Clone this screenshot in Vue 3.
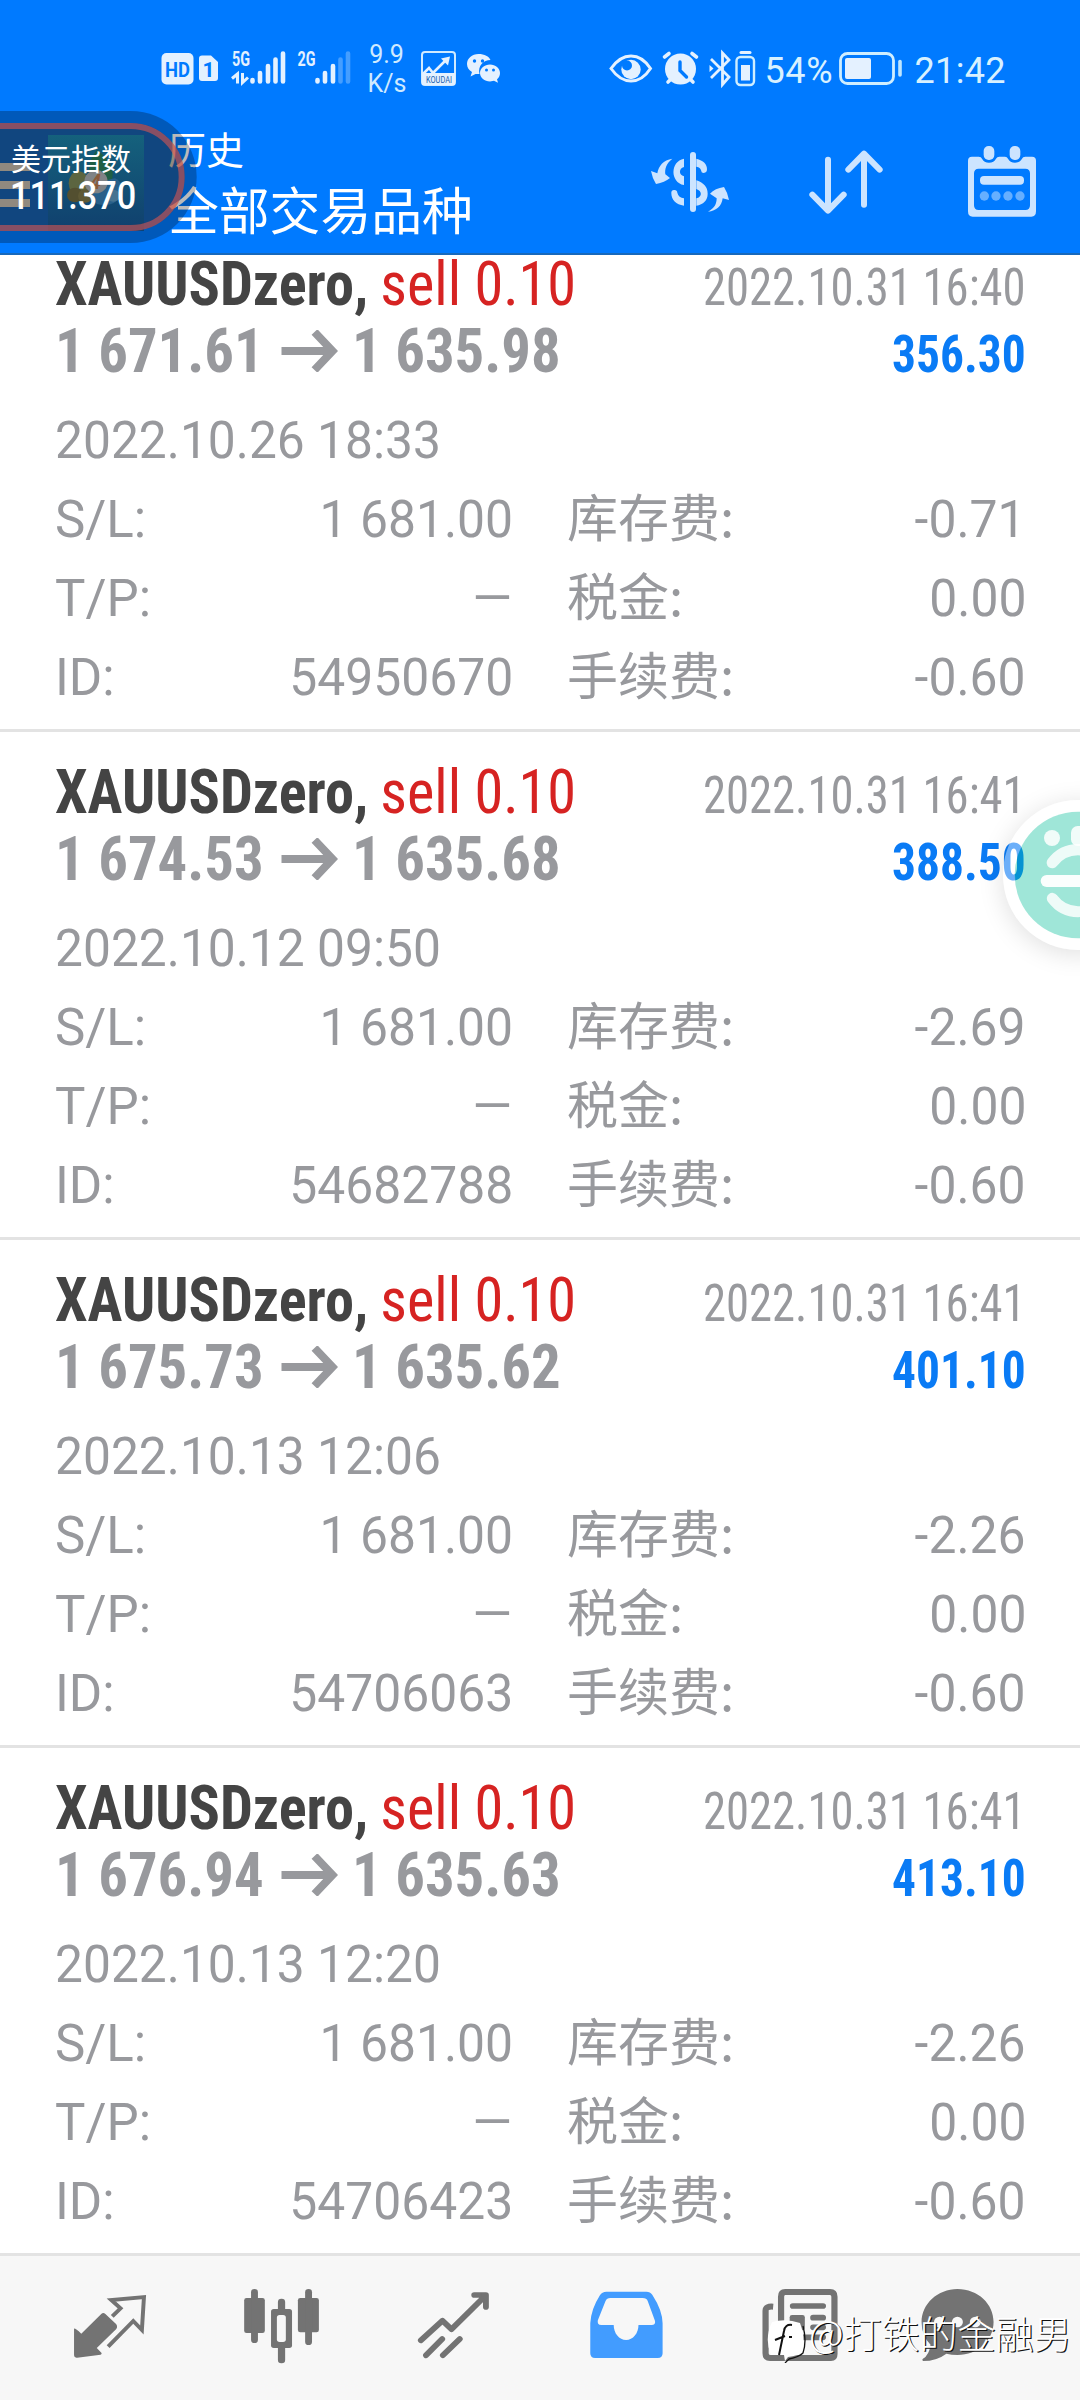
<script setup>
const deals = [
  { open: '1 671.61', close: '1 635.98', closed: '2022.10.31 16:40', profit: '356.30', opened: '2022.10.26 18:33', id: '54950670', swap: '-0.71' },
  { open: '1 674.53', close: '1 635.68', closed: '2022.10.31 16:41', profit: '388.50', opened: '2022.10.12 09:50', id: '54682788', swap: '-2.69' },
  { open: '1 675.73', close: '1 635.62', closed: '2022.10.31 16:41', profit: '401.10', opened: '2022.10.13 12:06', id: '54706063', swap: '-2.26' },
  { open: '1 676.94', close: '1 635.63', closed: '2022.10.31 16:41', profit: '413.10', opened: '2022.10.13 12:20', id: '54706423', swap: '-2.26' },
]
const rowsOf = (d) => [
  { a: 'S/L:', av: '1 681.00', b: '库存费:', bv: d.swap },
  { a: 'T/P:', av: '—', b: '税金:', bv: '0.00' },
  { a: 'ID:', av: d.id, b: '手续费:', bv: '-0.60' },
]
</script>

<template>
  <div class="screen">
    <header class="header">
      <div class="status">
        <svg class="st-left" width="350" height="60" viewBox="160 40 350 60">
          <rect x="161.5" y="53" width="32" height="31.500" rx="5" fill="#e4f1ff" />
          <text x="165" y="76.500" class="hd" textLength="25" lengthAdjust="spacingAndGlyphs">HD</text>
          <path d="M202 55.500h9l7 6.500v16a3 3 0 0 1-3 3h-13a3 3 0 0 1-3-3v-19.500a3 3 0 0 1 3-3z" fill="#e4f1ff" />
          <text x="202.500" y="76.500" class="hd">1</text>
          <text x="232" y="66" class="net" textLength="18" lengthAdjust="spacingAndGlyphs">5G</text>
          <path d="M232 78.500l5.500-4.500v9.500M242.500 73v9.500l5.500-5" fill="none" stroke="#e4f1ff" stroke-width="3" />
          <g stroke="#e4f1ff" stroke-width="4.600" stroke-linecap="round">
            <path d="M252.500 80v1.500M260 73v8.500M268 66v15.500M275.500 59.500v22M283 53.500v28" />
            <path d="M317.500 80v1.500M325 73v8.500M333 66v15.500" />
            <path d="M340.500 59.500v22M348 53.500v28" opacity=".3" />
          </g>
          <text x="297.500" y="66" class="net" textLength="18" lengthAdjust="spacingAndGlyphs">2G</text>
          <text x="386.500" y="63" class="speed" text-anchor="middle">9.9</text>
          <text x="387" y="92" class="speed" text-anchor="middle">K/s</text>
          <rect x="422" y="52" width="33" height="33" rx="3" fill="none" stroke="#cfeaff" stroke-width="2" />
          <path d="M422 73h33v12h-33z" fill="#e4f1ff" />
          <path d="M423 74l6-6 4 5 14-14" fill="none" stroke="#e4f1ff" stroke-width="2.600" />
          <path d="M441 58.500l9-2-2 9z" fill="#e4f1ff" />
          <text x="426" y="82.500" class="koudai" textLength="26" lengthAdjust="spacingAndGlyphs">KOUDAI</text>
          <path d="M478.500 54c-6.500 0-11.500 4.500-11.500 10 0 3.500 2 6.500 5 8l-1.500 4.500 5-2.500h4c-2-8 4-14 11-14-1.500-3.500-6-6-12-6z" fill="#e4f1ff" />
          <path d="M490 64.500c-5.500 0-10 3.800-10 8.500s4.500 8.500 10 8.500l4-.7 4 2-1-3.500c2-1.500 3-3.800 3-6.300 0-4.700-4.500-8.500-10-8.500z" fill="#e4f1ff" />
          <g fill="#007aff"><circle cx="474.500" cy="61" r="1.700" /><circle cx="482.500" cy="61" r="1.700" /><circle cx="486.500" cy="70" r="1.500" /><circle cx="493.500" cy="70" r="1.500" /></g>
        </svg>
        <svg class="st-right" width="420" height="60" viewBox="600 40 420 60">
          <path d="M611 68.500C617 60 623 56 631 56s14 4 19.500 12.500C645 77 639 81 631 81s-14-4-20-12.500z" fill="none" stroke="#e4f1ff" stroke-width="3" />
          <circle cx="631" cy="69.500" r="9.700" fill="#e4f1ff" /><circle cx="627" cy="65.500" r="5" fill="#007aff" />
          <circle cx="680.500" cy="69" r="15.500" fill="#e4f1ff" />
          <path d="M664.500 57l4.500-3.500M696.500 57l-4.500-3.500M668 82l4-4M693 82l-4-4" stroke="#e4f1ff" stroke-width="3.600" stroke-linecap="round" />
          <path d="M680 62v8.500l6.500 6.500" fill="none" stroke="#007aff" stroke-width="3.400" stroke-linecap="round" />
          <path d="M711 59l18 18-6.500 7.500V53l6.500 7L711 78" fill="none" stroke="#e4f1ff" stroke-width="2.800" />
          <path d="M709.500 65l4 3.500-4 3.500z" fill="#e4f1ff" />
          <path d="M741 52.500h9" stroke="#e4f1ff" stroke-width="3" stroke-linecap="round" />
          <rect x="736.500" y="57" width="17.500" height="28" rx="4" fill="none" stroke="#cfeeff" stroke-width="2.400" />
          <path d="M741 65h9v15.500h-9z" fill="#e4f1ff" />
          <text x="764.500" y="83" class="clock" textLength="68">54%</text>
          <rect x="840.500" y="53.500" width="53" height="30" rx="7" fill="none" stroke="#cfeeff" stroke-width="2.800" />
          <rect x="845" y="58" width="26" height="21" rx="2" fill="#e4f1ff" />
          <path d="M900 61.500v13.500" stroke="#bfe6ff" stroke-width="3.600" stroke-linecap="round" />
          <text x="914.500" y="83" class="clock" textLength="91">21:42</text>
        </svg>
      </div>
      <div class="toolbar">
        <svg class="menu" width="30" height="44" viewBox="0 0 30 44"><path d="M0 4h30M0 22h30M0 40h30" stroke="#fff" stroke-width="8" /></svg>
        <div class="titles">
          <div class="t1">历史</div>
          <div class="t2">全部交易品种</div>
        </div>
        <div class="actions">
          <svg width="80" height="62" viewBox="90 90 240 186" fill="#cce4ff">
            <path d="M192 113V138C176 142 176 162 192 166V192C150 184 150 121 192 113Z" />
            <rect x="210" y="93" width="18" height="180" rx="9" />
            <path d="M229 113C250 118 262 130 261 145A10 10 0 0 1 245 154C243 142 238 138 229 137Z" />
            <path d="M229 178C252 186 263 198 263 218C263 238 250 250 229 254V232C247 228 247 210 229 204Z" />
            <path d="M154 217A9 9 0 0 1 172 215C174 225 182 231 192 232V254C168 252 154 236 154 217Z" />
            <path d="M157 113C138 128 134 145 136 160L150 171Q134 184 108 189Q97 172 93 150L112 157C115 135 130 117 157 113Z" />
            <path d="M264 272C284 262 290 248 290 232L270 218Q285 202 312 198Q323 215 327 237L308 232C305 255 290 270 264 272Z" />
          </svg>
          <svg class="sort" width="74" height="64" viewBox="567 91 222 192" fill="none" stroke="#cce4ff" stroke-width="18" stroke-linecap="round" stroke-linejoin="round">
            <path d="M624 120V272M577 225L624 273L671 225M732 255V102M685 150L732 102L779 150" />
          </svg>
          <svg width="68" height="71" viewBox="1044 80 204 213" fill="#cce4ff">
            <path fill-rule="evenodd" d="M1056 112H1076Q1084 112 1086 118Q1092 130 1107 130T1128 118Q1131 112 1138 112H1155Q1161 112 1164 118Q1170 130 1185 130T1206 118Q1208 112 1216 112H1236Q1248 112 1248 124V276Q1248 292 1234 292H1058Q1044 292 1044 276V124Q1044 112 1056 112ZM1076 148Q1062 148 1062 162V258Q1062 272 1076 272H1216Q1230 272 1230 258V162Q1230 148 1216 148Z" />
            <rect x="1088" y="90" width="38" height="36" rx="17" fill="#007aff" /><rect x="1166" y="90" width="38" height="36" rx="17" fill="#007aff" />
            <rect x="1091" y="80" width="32" height="42" rx="15" /><rect x="1169" y="80" width="32" height="42" rx="15" />
            <rect x="1080" y="170" width="132" height="26" rx="12" />
            <g opacity=".5"><circle cx="1093" cy="230" r="14" /><circle cx="1128" cy="230" r="14" /><circle cx="1164" cy="230" r="14" /><circle cx="1200" cy="230" r="14" /></g>
          </svg>
        </div>
      </div>
    </header>

    <main class="list">
      <article v-for="d in deals" :key="d.id" class="deal">
        <div class="line">
          <div class="head"><b class="symbol">XAUUSDzero,</b><span class="side">sell 0.10</span></div>
          <span class="closed">{{ d.closed }}</span>
        </div>
        <div class="line">
          <div class="prices">
            <span>{{ d.open }}</span>
            <svg width="57" height="42" viewBox="0 0 56 42" fill="none" stroke="#98999d" stroke-width="8"><path d="M0 21H51M33 2L51 21L33 40" /></svg>
            <span>{{ d.close }}</span>
          </div>
          <span class="profit">{{ d.profit }}</span>
        </div>
        <div class="opened"><span>{{ d.opened }}</span></div>
        <div v-for="r in rowsOf(d)" :key="r.a" class="row">
          <div class="cell"><span>{{ r.a }}</span><span class="r" :class="{ none: r.av === '—' }">{{ r.av }}</span></div>
          <div class="cell"><span class="cn">{{ r.b }}</span><span class="r">{{ r.bv }}</span></div>
        </div>
      </article>
    </main>

    <nav class="nav">
      <svg viewBox="0 48 522.670 432" preserveAspectRatio="none">
        <path d="M215 266Q218 264 236 281L294 222Q300 216 306 222L337 252Q343 260 337 268L281 324L295 339Q296 343 292 344L224 353Q215 354 215 346Z" fill="#737373" />
        <path d="M326 229L350 205L323 180L418 171L412 270L387 243L314 320" fill="none" stroke="#737373" stroke-width="11.500" />
      </svg>
      <svg viewBox="522.670 48 522.670 432" preserveAspectRatio="none">
        <g fill="#737373"><rect x="709" y="174" width="60" height="105" rx="7" /><rect x="865" y="174" width="61" height="103" rx="7" /><rect x="729" y="147" width="20" height="162" rx="10" /><rect x="886" y="147" width="20" height="168" rx="10" /><rect x="807" y="176" width="21" height="50" rx="10" /><rect x="807" y="305" width="21" height="65" rx="10" />
          <rect x="787" y="207" width="61" height="117" rx="8" /></g>
        <rect x="804" y="225" width="26" height="81" rx="8" fill="#f7f7f7" />
      </svg>
      <svg viewBox="1045.330 48 522.670 432" preserveAspectRatio="none" fill="none" stroke="#737373" stroke-width="17" stroke-linecap="round" stroke-linejoin="round">
        <path d="M1222 301L1285 242L1311 268L1405 172M1377 165H1411V201" />
        <path d="M1237 346L1284 297M1286 346L1335 297" />
        <path d="M1402 164H1412V178Z" stroke-width="10" fill="#737373" />
      </svg>
      <svg viewBox="0 48 522.670 432" preserveAspectRatio="none">
        <path fill="#429cff" fill-rule="evenodd" d="M193 155H309Q320 155 326 164Q356 212 356 250V340Q356 354 342 354H160Q146 354 146 340V250Q148 208 174 166Q180 155 193 155ZM204 174Q194 174 190 184L168 241Q165 255 178 255H214C214 280 230 300 250 300S286 280 286 255H324Q336 255 334 243L313 184Q310 174 298 174Z" />
      </svg>
      <svg viewBox="522.670 48 522.670 432" preserveAspectRatio="none">
        <path d="M677 200Q655 198 655 212V340Q655 354 668 354H845Q855 354 855 342V170Q855 156 842 156H712Q700 156 700 170V300" fill="none" stroke="#737373" stroke-width="18" />
        <path d="M734 198H822M793 233H822M793 262H822M734 292H822" stroke="#737373" stroke-width="17" stroke-linecap="round" />
        <rect x="725" y="225" width="44" height="46" rx="7" fill="#737373" />
      </svg>
      <svg viewBox="1045.330 48 522.670 432" preserveAspectRatio="none">
        <path d="M1212 147C1272 147 1317 192 1317 246S1272 345 1212 345Q1195 345 1180 341Q1152 363 1112 363Q1108 359 1112 356Q1130 345 1134 314Q1108 288 1108 246C1108 192 1155 147 1212 147Z" fill="#737373" />
        <g fill="#f7f7f7"><circle cx="1160" cy="246" r="16" /><circle cx="1212" cy="246" r="16" /><circle cx="1264" cy="246" r="16" /></g>
      </svg>
    </nav>

    <div class="index-pill">
      <svg width="200" height="140" viewBox="0 21 600 420">
        <defs>
          <linearGradient id="teal" x1="0" y1="0" x2="0" y2="1"><stop offset="0" stop-color="#15647c" /><stop offset="1" stop-color="#103f6c" /></linearGradient>
        </defs>
        <path d="M0 33H392A198 198 0 0 1 392 429H0Z" fill="#000" fill-opacity=".27" />
        <path d="M0 69H392A162 162 0 0 1 392 393H0Z" fill="#362000" fill-opacity=".317" />
        <g>
          <rect x="144" y="105" width="288" height="288" fill="url(#teal)" fill-opacity=".9" />
          <path d="M290 150Q350 190 335 245L270 235Q258 190 290 150Z" fill="#1f5f44" />
          <ellipse cx="236" cy="250" rx="30" ry="36" fill="#5c6540" />
          <ellipse cx="225" cy="285" rx="24" ry="22" fill="#534f30" /><ellipse cx="256" cy="288" rx="22" ry="20" fill="#5f5935" />
          <path d="M275 285Q300 240 345 235Q375 250 366 285Q340 325 290 312Z" fill="#28608a" />
          <ellipse cx="340" cy="287" rx="20" ry="18" fill="#467390" />
          <circle cx="288" cy="245" r="35" fill="#7f8386" />
          <text x="271" y="266" class="four">4</text>
        </g>
        <path d="M-20 78H392A153 153 0 0 1 392 384H-20Z" fill="none" stroke="#ff574a" stroke-opacity=".5" stroke-width="18" />
      </svg>
      <div class="pill-text"><span class="p1">美元指数</span><span class="p2">111.370</span></div>
    </div>

    <div class="bubble">
      <svg width="150" height="150" viewBox="129 90 450 450">
        <circle cx="354" cy="315" r="207" fill="none" stroke="#fff" stroke-opacity=".4" stroke-width="36" />
        <circle cx="354" cy="315" r="190" fill="#00bd98" fill-opacity=".376" />
        <circle cx="276" cy="204" r="24" fill="#fff" fill-opacity=".85" />
        <rect x="333" y="168" width="44" height="60" rx="20" fill="#fff" fill-opacity=".85" />
        <path d="M277 278C298 250 325 239 354 239S410 250 431 278" fill="none" stroke="#fff" stroke-opacity=".82" stroke-width="34" stroke-linecap="round" />
        <path d="M260 333H448" stroke="#fff" stroke-opacity=".95" stroke-width="36" stroke-linecap="round" />
        <path d="M277 385C298 413 325 425 354 425S410 413 431 385" fill="none" stroke="#fff" stroke-opacity=".82" stroke-width="33" stroke-linecap="round" />
      </svg>
    </div>

    <div class="watermark">
      <svg width="40" height="44" viewBox="0 0 40 44">
        <path d="M6 3Q20-1 34 4Q40 20 36 33Q32 37 22 38L19 42L18 36H5Q-2 20 6 3Z" fill="#fff" />
        <path d="M37 7Q41 22 37 34Q33 38 23 40L19 44" fill="none" stroke="#111" stroke-width="1.300" />
        <path d="M26 6Q19 5 18 12L13 36M9 21L19 17M23 18h3" fill="none" stroke="#111" stroke-width="2" />
      </svg>
      <span>@打铁的金融男</span>
    </div>
  </div>
</template>

<style>
body { margin: 0; background: #fff; }
</style>

<style scoped>
.screen { position: relative; width: 1080px; height: 2400px; overflow: hidden; display: flex; flex-direction: column; background: #fff; font-family: Roboto, "Noto Sans CJK SC", sans-serif; color: #98999d; }
.header { position: relative; z-index: 1; flex: none; height: 255px; box-sizing: border-box; border-bottom: 2px solid #1869bb; background: #007aff; }
.status { display: flex; height: 100px; padding-top: 40px; box-sizing: border-box; }
.st-left { margin-left: 160px; }
.st-right { margin-left: 90px; }
.hd { font-weight: 700; font-size: 21px; fill: #007aff; }
.net { font-weight: 700; font-size: 21px; fill: #e4f1ff; }
.speed { font-size: 25px; fill: #cfeaff; }
.koudai { font-size: 8.500px; fill: #1b62b0; }
.clock { font-size: 36px; fill: #d8f1ff; }
.toolbar { display: flex; height: 153px; }
.menu { margin-top: 63px; }
.titles { margin-left: 138px; padding-top: 23px; color: #fff; font-family: "Noto Sans CJK SC", sans-serif; width: 482px; }
.t1 { font-size: 38px; line-height: 50px; }
.t2 { font-size: 50.800px; line-height: 60px; margin-top: 5px; }
.actions { display: flex; align-items: center; width: 386px; justify-content: space-between; padding-top: 9px; height: 154px; box-sizing: border-box; }
.sort { margin-right: 6px; }
.list { margin-top: -31px; flex: none; }
.deal { height: 508px; box-sizing: border-box; padding: 26px 54px 0 55px; border-bottom: 3px solid #e3e3e3; }
.line { display: flex; justify-content: space-between; align-items: baseline; height: 67px; line-height: 67px; white-space: nowrap; font-stretch: 75%; font-size: 51px; }
.head { transform: scaleX(.94); transform-origin: left; }
.symbol { font-size: 62px; font-weight: 700; color: #444; margin-right: 13px; }
.side { font-size: 62px; color: #d62322; }
.closed { transform: scaleX(.915); transform-origin: right; }
.prices { display: flex; align-items: baseline; font-size: 62px; font-weight: 700; }
.prices span { transform: scaleX(.947); transform-origin: left; }
.prices svg { margin: 0 14px 0 6px; }
.profit { font-weight: 700; color: #0a7bf5; transform: scaleX(.93); transform-origin: right; }
.opened, .row { font-size: 51px; line-height: 79px; height: 79px; }
.opened { margin-top: 17px; white-space: nowrap; }
.opened span { display: inline-block; transform: scaleX(.975); transform-origin: left; }
.r { transform: scaleX(.977); transform-origin: right; }
.none { transform: scaleX(1) translateX(-1px); }
.cn { font-family: "Noto Sans CJK SC", sans-serif; transform: translateY(-4px); }
.row { display: grid; grid-template-columns: 458px 1fr; column-gap: 54px; }
.cell { display: flex; justify-content: space-between; align-items: flex-start; white-space: nowrap; height: 79px; }
.nav { flex: none; display: flex; height: 144px; background: #f7f7f7; }
.nav svg { width: 180px; height: 144px; }
.index-pill { position: absolute; z-index: 2; left: 0; top: 107px; width: 200px; height: 140px; }
.pill-text { position: absolute; left: 11px; top: 32px; display: flex; flex-direction: column; align-items: flex-start; color: #fff; }
.p1 { font-family: "Noto Sans CJK SC", sans-serif; font-size: 30px; line-height: 36px; }
.p2 { font-size: 38px; line-height: 43px; font-weight: 500; margin-left: -1px; transform: scaleX(.9); transform-origin: left; }
.four { font-size: 58px; font-weight: 700; font-style: italic; fill: #8a5a3a; }
.bubble { position: absolute; z-index: 2; left: 1003px; top: 800px; width: 150px; height: 150px; border-radius: 50%; box-shadow: 0 4px 26px rgba(0, 0, 0, .13); }
.watermark { position: absolute; z-index: 2; left: 766px; top: 2309px; display: flex; align-items: flex-start; color: #fff; font-family: "Noto Sans CJK SC", sans-serif; font-weight: 300; font-size: 38px; line-height: 46px; white-space: nowrap; text-shadow: 1.200px 1.200px 0 #111; }
.watermark svg { margin-top: 10px; }
.watermark span { margin-left: 3px; }
</style>
